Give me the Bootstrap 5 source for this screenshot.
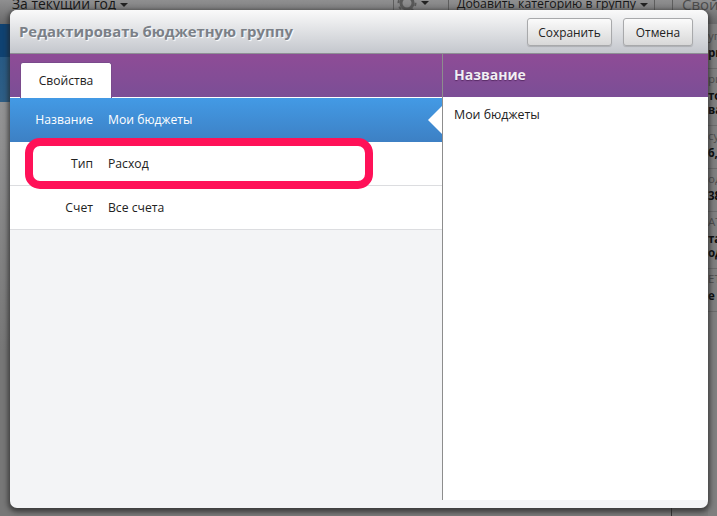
<!DOCTYPE html>
<html lang="ru">
<head>
<meta charset="utf-8">
<link href="https://cdn.jsdelivr.net/npm/bootstrap@5.3.0/dist/css/bootstrap.min.css" rel="stylesheet">
<style>
html,body{height:516px;overflow:hidden;margin:0}
body{background:#7c7c7c;font-family:"Open Sans","Noto Sans",sans-serif;font-size:12px;color:#222}
.stage{position:relative;width:717px;height:516px;overflow:hidden}
.backdrop{position:absolute;inset:0;background:#7a7a7a;display:flex;flex-direction:column}
.bd-top{height:24px;flex:none;background:linear-gradient(#8f8f90,#69696a);overflow:hidden}
.bd-row{height:10px;overflow:hidden;padding-left:12px;display:flex;color:#161616}
.bd-row>span{line-height:16px;margin-top:-4px;flex:none;white-space:nowrap}
.bd-year{width:381px;font-size:13.9px}
.bd-gear{width:55px;border-left:1px solid #5e5e5e;padding-left:3px;display:flex;align-items:center}
.bd-add{width:207px;border-left:1px solid #5e5e5e;border-right:1px solid #5e5e5e;padding-left:8px;font-size:12.3px}
.bd-props{margin-left:17px;border-left:1px solid #5e5e5e;padding-left:9px;font-size:15px;color:#4c4c4c}
.caret-d{display:inline-block;border-left:4px solid transparent;border-right:4px solid transparent;border-top:4px solid #222;vertical-align:middle;margin-left:4px}
.bd-body{flex:1 1 auto;display:flex;justify-content:space-between;min-height:0}
.bd-left{width:10px;display:flex;flex-direction:column}
.bl-a{height:33px;background:#0f4272}
.bl-b{height:45px;background:linear-gradient(#285a85,#2e5e86)}
.bl-c{flex:1 1 auto;background:linear-gradient(#949495,#777 60%)}
.bd-right{width:9px;padding-top:2px;font-size:11.5px;color:#111;overflow:hidden;background:#7f7f7f}
.rs-group{padding:2px 0 8px;border-bottom:1px solid #6c6c6c;white-space:nowrap}
.rs-label{line-height:16px;margin-bottom:2px;color:#4d4d4d}
.rs-val{line-height:14px;font-weight:700;color:#0c0c0c}
.bd-foot-line{position:absolute;left:671px;top:508px;width:1px;height:8px;background:#333}
.dlg{position:absolute;left:10px;top:10px;width:698px;height:498px;background:#f3f4f6;border-radius:7px;box-shadow:0 2px 5px 2px rgba(35,35,35,.7);overflow:hidden;display:flex;flex-direction:column}
.dlg-head{height:44px;background:linear-gradient(#fafafa,#c4c7cd);border-bottom:1px solid #8e8f94;padding:0 15px 0 9px;flex:none}
.dlg-title{font-size:14.9px;font-weight:700;color:#7b8087;text-shadow:1px 1px 1px #fff;margin:0 0 2px;line-height:20px}
.btn-sk{font-size:11.9px;line-height:16px;padding:5px 0;height:28px;color:#222;background:linear-gradient(#fbfbfb,#d8d8d8);border:1px solid #a8a9ab;border-radius:3px;box-shadow:0 1px 1px rgba(0,0,0,.15)}
.btn-save{width:85px}
.btn-cancel{width:70px}
.btn-gap{gap:11px}
.panes{flex:none;height:446px}
.pane-left{width:433px;flex:none;border-right:1px solid #8d8d8d}
.pane-right{flex:1 1 auto;background:#fff}
.purple{height:44px;background:linear-gradient(#8e4c96,#7b4e96)}
.purple-left{padding:8px 0 0 10px;border-bottom:1px solid #fff}
.tab-sk{width:92px;height:36px;background:#fff;border:1px solid #7a4a8c;border-bottom:0;border-radius:3px 3px 0 0;text-align:center;line-height:35px;font-size:12.1px;color:#222}
.purple-right{height:43px;padding:0 11px;line-height:42px;font-size:14px;font-weight:700;color:#f2eef4;text-shadow:0 1px 1px rgba(60,20,70,.6)}
.prop-row{height:44px;font-size:12.2px;background:#fff;border-bottom:1px solid #dcdde0;position:relative;padding-top:1px}
.prop-row.on{background:linear-gradient(#439ae5,#3d80c4);color:#fff;border-bottom:0;padding-top:0}
.prop-k{width:83px;text-align:right;flex:none}
.prop-v{margin-left:15px}
.notch{position:absolute;right:0;top:8px;width:0;height:0;border-top:14px solid transparent;border-bottom:14px solid transparent;border-right:14px solid #fff}
.hl{position:absolute;left:25px;top:138px;width:348px;height:51px;border:8px solid #ff1158;border-radius:15px}
.right-body{padding:9px 11px;font-size:12.4px;line-height:18px}
</style>
</head>
<body>
<div class="stage">
  <div class="backdrop">
    <div class="bd-top">
      <div class="bd-row">
        <span class="bd-year">За текущий год<i class="caret-d"></i></span>
        <span class="bd-gear"><svg width="20" height="16" viewBox="0 0 20 16" aria-hidden="true"><circle cx="10" cy="8" r="6" fill="none" stroke="#585858" stroke-width="3"/><circle cx="10" cy="8" r="8.5" fill="none" stroke="#585858" stroke-width="2" stroke-dasharray="3 3.6"/></svg><i class="caret-d"></i></span>
        <span class="bd-add">Добавить категорию в группу<i class="caret-d"></i></span>
        <span class="bd-props">Свойства</span>
      </div>
    </div>
    <div class="bd-body">
      <div class="bd-left"><div class="bl-a"></div><div class="bl-b"></div><div class="bl-c"></div></div>
      <div class="bd-right">
        <div class="rs-group"><div class="rs-label">уп</div><div class="rs-val">ри</div></div>
        <div class="rs-group"><div class="rs-label">ри</div><div class="rs-val">то</div><div class="rs-val">ва</div></div>
        <div class="rs-group"><div class="rs-label">су</div><div class="rs-val">6,</div></div>
        <div class="rs-group"><div class="rs-label">од</div><div class="rs-val">38</div></div>
        <div class="rs-group"><div class="rs-label">АТ</div><div class="rs-val">та</div><div class="rs-val">од</div></div>
        <div class="rs-group"><div class="rs-label">ЕТ</div><div class="rs-val">е</div></div>
      </div>
    </div>
    <div class="bd-foot-line"></div>
  </div>
  <div class="dlg">
    <div class="dlg-head d-flex align-items-center justify-content-between">
      <h1 class="dlg-title">Редактировать бюджетную группу</h1>
      <div class="d-flex btn-gap">
        <button class="btn btn-sk btn-save" type="button">Сохранить</button>
        <button class="btn btn-sk btn-cancel" type="button">Отмена</button>
      </div>
    </div>
    <div class="panes d-flex">
      <div class="pane-left">
        <div class="purple purple-left"><div class="tab-sk">Свойства</div></div>
        <div class="prop-row on d-flex align-items-center"><span class="prop-k">Название</span><span class="prop-v">Мои бюджеты</span><i class="notch"></i></div>
        <div class="prop-row d-flex align-items-center"><span class="prop-k">Тип</span><span class="prop-v">Расход</span></div>
        <div class="prop-row d-flex align-items-center"><span class="prop-k">Счет</span><span class="prop-v">Все счета</span></div>
      </div>
      <div class="pane-right">
        <div class="purple purple-right">Название</div>
        <div class="right-body">Мои бюджеты</div>
      </div>
    </div>
  </div>
  <div class="hl"></div>
</div>
<script src="https://cdn.jsdelivr.net/npm/bootstrap@5.3.0/dist/js/bootstrap.bundle.min.js"></script>
</body>
</html>
